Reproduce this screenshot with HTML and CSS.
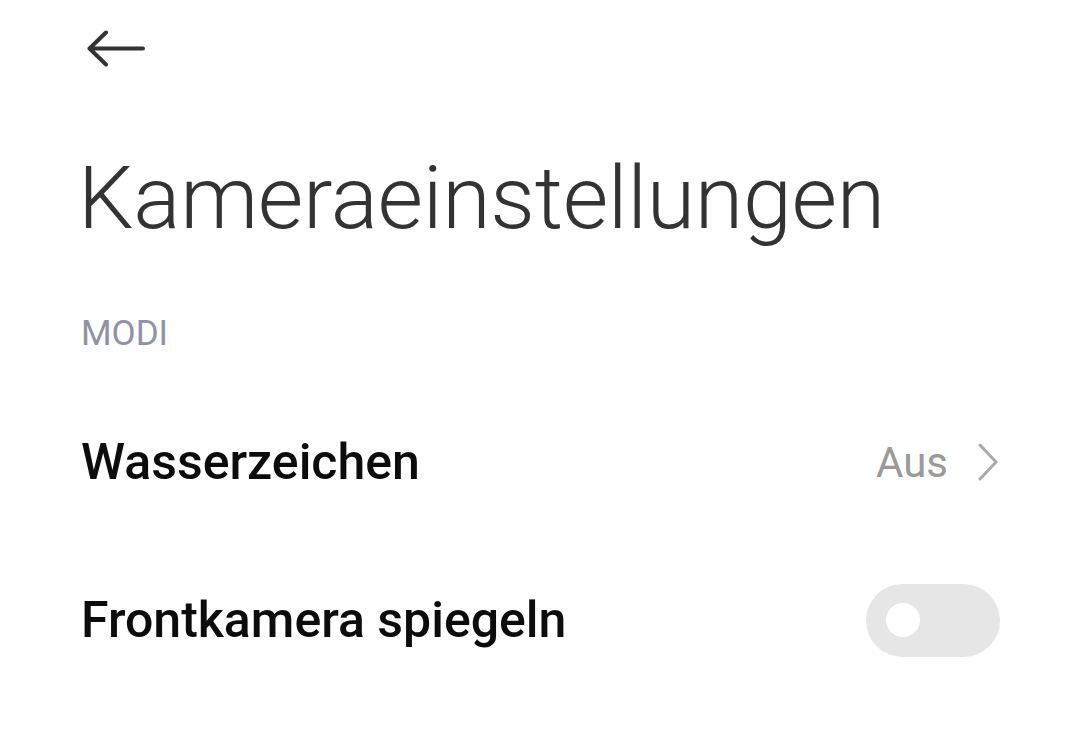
FILE: index.html
```html
<!DOCTYPE html>
<html lang="de">
<head>
<meta charset="utf-8">
<link rel="stylesheet" href="styles.css">
</head>
<body>
<div class="page">
  <div class="topbar">
    <svg class="back" width="60" height="40" viewBox="0 0 60 40">
      <path d="M57 18.5H4M20 2.5L3.5 18.5L20 34.5" fill="none" stroke="#333" stroke-width="4" stroke-linecap="round" stroke-linejoin="round"/>
    </svg>
  </div>
  <h1 class="title">Kameraeinstellungen</h1>
  <div class="section">MODI</div>
  <div class="list">
    <div class="row">
      <span class="label">Wasserzeichen</span>
      <span class="value">Aus
        <svg class="chev" width="22" height="38" viewBox="0 0 22 38">
          <path d="M3 2L19 19L3 36" fill="none" stroke="#aaa" stroke-width="3" stroke-linecap="round" stroke-linejoin="round"/>
        </svg>
      </span>
    </div>
    <div class="row">
      <span class="label">Frontkamera spiegeln</span>
      <span class="toggle"><span class="knob"></span></span>
    </div>
  </div>
</div>
</body>
</html>
```

FILE: styles.css
```css
* { box-sizing: border-box; }
html, body { margin: 0; padding: 0; background: #fff; }
body { font-family: Roboto, "Noto Sans", sans-serif; width: 1080px; height: 742px; overflow: hidden; }
.page { padding: 0 80px 0 78px; }
.topbar { height: 96px; display: flex; align-items: center; padding-left: 8px; }
.back { display: block; margin-top: 3px; }
.title { margin: 0; font-weight: 300; font-size: 88px; line-height: 100px; color: #333; letter-spacing: -0.3px; padding-top: 52px; box-sizing: content-box; height: 98px; }
.section { font-size: 35px; color: #8d93a5; padding-left: 3px; margin-top: 68px; line-height: 40px; }
.list { margin-top: 29px; }
.row { display: flex; align-items: center; justify-content: space-between; height: 158px; padding-left: 3px; }
.label { font-size: 50px; font-weight: 500; color: #0c0c0c; }
.value { display: flex; align-items: center; gap: 29px; font-size: 42px; color: #9a9a9a; margin-right: 1px; }
.chev { display: block; }
.toggle { width: 134px; height: 73px; border-radius: 37px; background: #e6e6e6; display: flex; align-items: center; padding-left: 20px; }
.knob { width: 34px; height: 34px; border-radius: 50%; background: #fff; }
```
